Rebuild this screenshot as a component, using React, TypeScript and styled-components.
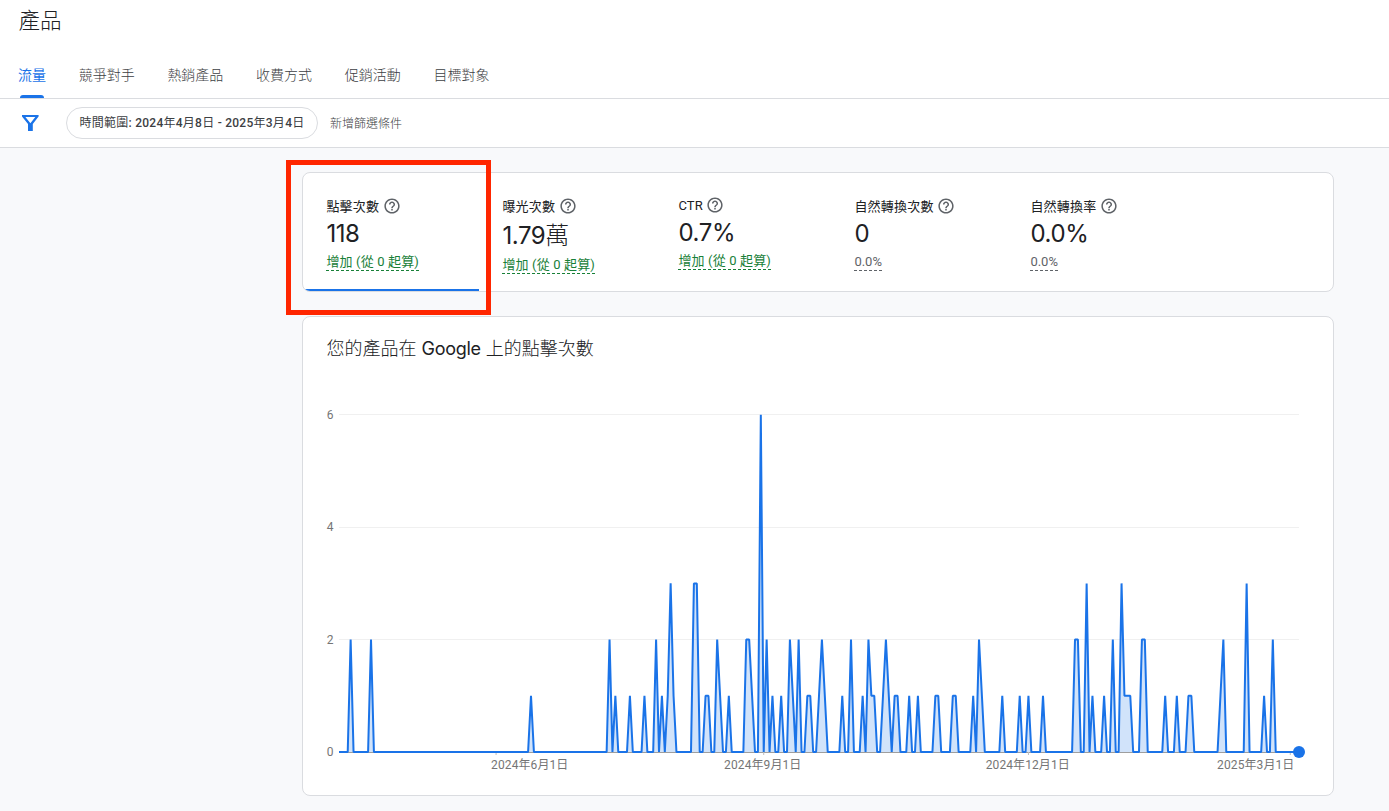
import React from "react";
import styled, { createGlobalStyle } from "styled-components";

const uiFont = `Roboto, "Noto Sans CJK TC", sans-serif`;
const displayFont = `Inter, "Noto Sans CJK TC", sans-serif`;

const GlobalStyle = createGlobalStyle`
  *, *::before, *::after { box-sizing: border-box; }
  body {
    margin: 0;
    background: #f8f9fb;
    color: #202124;
    font-family: ${uiFont};
    font-weight: 300;
    overflow: hidden;
  }
`;

const Page = styled.div`
  display: flex;
  flex-direction: column;
  min-height: 811px;
`;

const Header = styled.header`
  display: flex;
  flex-direction: column;
  height: 99px;
  background: #fff;
  border-bottom: 1px solid #dadce0;
`;

const PageTitle = styled.h1`
  margin: 0;
  padding: 0 18.5px;
  font-size: 21.5px;
  line-height: 42px;
  height: 52px;
  font-weight: 300;
`;

const Tabs = styled.nav`
  display: flex;
  gap: 32.7px;
  padding: 0 18px;
  height: 46px;
`;

const Tab = styled.a<{ $active?: boolean }>`
  display: flex;
  flex-direction: column;
  align-items: center;
  justify-content: space-between;
  font-size: 14px;
  line-height: 46px;
  white-space: nowrap;
  font-weight: ${(p) => (p.$active ? 400 : 300)};
  color: ${(p) => (p.$active ? "#1a73e8" : "#3c4043")};
`;

const TabLabel = styled.span`
  height: 43px;
`;

const TabIndicator = styled.span`
  width: 24px;
  height: 3px;
  border-radius: 3px 3px 0 0;
  background: #1a73e8;
`;

const FilterBar = styled.div`
  display: flex;
  align-items: center;
  height: 49px;
  padding-left: 18px;
  background: #fff;
  border-bottom: 1px solid #dadce0;
`;

const FilterIcon = styled.svg`
  width: 24px;
  height: 24px;
  margin-right: 24px;
  fill: #1a73e8;
`;

const Chip = styled.button`
  width: 252px;
  height: 32px;
  padding: 0;
  border: 1px solid #dadce0;
  border-radius: 16px;
  background: #fff;
  color: #3c4043;
  font: 500 12px/30px ${uiFont};
  letter-spacing: 0.25px;
  white-space: nowrap;
`;

const Han = styled.span`
  font-weight: 400;
`;

const AddFilter = styled.span`
  margin-left: 12px;
  padding-bottom: 2px;
  font-size: 12px;
  color: #3c4043;
`;

const Content = styled.main`
  display: flex;
  flex-direction: column;
  gap: 24px;
  width: 1032px;
  margin: 24px 0 0 302px;
  position: relative;
`;

const Card = styled.section`
  background: #fff;
  border: 1px solid #dadce0;
  border-radius: 8px;
  overflow: hidden;
`;

const MetricsCard = styled(Card)`
  display: flex;
  height: 120px;
`;

const Metric = styled.div<{ $active?: boolean }>`
  width: 176px;
  padding: 24px 0 0 23.4px;
  box-shadow: ${(p) => (p.$active ? "inset 0 -2px 0 #1a73e8" : "none")};
`;

const MetricLabel = styled.div<{ $latin?: boolean }>`
  display: flex;
  align-items: center;
  gap: 4.4px;
  height: ${(p) => (p.$latin ? 17 : 18)}px;
  font-size: 13px;
  font-weight: 400;
  letter-spacing: 0.2px;
  white-space: nowrap;
`;

const LabelText = styled.span<{ $latin?: boolean }>`
  padding-bottom: ${(p) => (p.$latin ? 0 : 2)}px;
`;

const HelpSvg = styled.svg<{ $raised?: boolean }>`
  width: 16px;
  height: 16px;
  margin-bottom: ${(p) => (p.$raised ? 1 : 0)}px;
  fill: #5f6368;
`;

const MetricValue = styled.div<{ $tall?: boolean }>`
  height: ${(p) => (p.$tall ? 39 : 36)}px;
  line-height: ${(p) => (p.$tall ? 42 : 37)}px;
  font-family: ${displayFont};
  font-size: 24px;
  font-weight: ${(p) => (p.$tall ? 300 : 400)};
  letter-spacing: -0.4px;
`;

const Figure = styled.span`
  font-weight: 400;
`;

const MetricDelta = styled.span<{ $positive?: boolean }>`
  display: inline-block;
  height: 19px;
  font-size: 13px;
  line-height: 20px;
  font-weight: 400;
  letter-spacing: ${(p) => (p.$positive ? 0.15 : 0)}px;
  white-space: nowrap;
  color: ${(p) => (p.$positive ? "#188038" : "#5f6368")};
  border-bottom: 1px dashed currentColor;
`;

const ChartCard = styled(Card)`
  display: flex;
  flex-direction: column;
  height: 480px;
`;

const ChartTitle = styled.h2`
  margin: 0;
  padding: 17px 23.5px 0;
  height: 84px;
  font-family: ${displayFont};
  font-size: 18px;
  line-height: 30px;
  font-weight: 300;
`;

const Brand = styled.span`
  font-weight: 400;
  letter-spacing: -0.3px;
`;

const ChartSvg = styled.svg`
  display: block;
  width: 1030px;
  height: 394px;
  font-family: ${uiFont};
  font-size: 12px;
  font-weight: 400;
  letter-spacing: 0.1px;
`;

const Highlight = styled.div`
  position: absolute;
  left: -16px;
  top: -12px;
  width: 205px;
  height: 155px;
  border: 5px solid #ff2600;
`;

const tabs = ["流量", "競爭對手", "熱銷產品", "收費方式", "促銷活動", "目標對象"];

const metrics = [
  { label: "點擊次數", value: "118", delta: "增加 (從 0 起算)", positive: true, active: true },
  { label: "曝光次數", value: "1.79", unit: "萬", delta: "增加 (從 0 起算)", positive: true },
  { label: "CTR", value: "0.7%", delta: "增加 (從 0 起算)", positive: true, latin: true },
  { label: "自然轉換次數", value: "0", delta: "0.0%" },
  { label: "自然轉換率", value: "0.0%", delta: "0.0%" },
];

// Clicks per day, keyed by days since 2024-04-08; other days have none.
const clicks: Record<number, number> = {
  4: 2, 11: 2, 66: 1, 93: 2, 95: 1, 100: 1, 105: 1, 109: 2, 111: 1,
  113: 1, 114: 3, 115: 1, 122: 3, 123: 3, 126: 1, 127: 1, 130: 2, 131: 1,
  134: 1, 140: 2, 141: 2, 142: 1, 145: 6, 147: 2, 149: 1, 152: 1, 155: 2,
  156: 1, 158: 2, 161: 1, 162: 1, 165: 1, 166: 2, 167: 1, 173: 1, 176: 2,
  180: 1, 182: 2, 183: 1, 184: 1, 187: 1, 188: 2, 189: 1, 191: 1, 192: 1,
  196: 1, 199: 1, 205: 1, 206: 1, 211: 1, 212: 1, 218: 1, 220: 2, 221: 1,
  228: 1, 234: 1, 237: 1, 242: 1, 253: 2, 254: 2, 257: 3, 259: 1, 263: 1,
  266: 2, 269: 3, 270: 1, 271: 1, 272: 1, 276: 2, 277: 2, 284: 1, 288: 1,
  292: 1, 293: 1, 303: 1, 304: 2, 312: 3, 318: 1, 321: 2,
};
const lastDay = 330;
const left = 36;
const right = 996;
const baseY = 351;
const unit = 56.2;
const dayX = (d: number) => left + (d * (right - left)) / lastDay;
const line = Array.from(
  { length: lastDay + 1 },
  (_, d) => `${dayX(d).toFixed(2)},${(baseY - (clicks[d] ?? 0) * unit).toFixed(1)}`
).join(" ");

const dateTicks = [
  { day: 54, label: "2024年6月1日", x: 226.8 },
  { day: 146, label: "2024年9月1日", x: 459.8 },
  { day: 237, label: "2024年12月1日", x: 724.8 },
  { day: 327, label: "2025年3月1日", x: 952.8 },
];

function HelpIcon({ raised }: { raised?: boolean }) {
  return (
    <HelpSvg $raised={raised} viewBox="1.5 1.5 21 21">
      <path d="M11 18h2v-2h-2v2zm1-16C6.48 2 2 6.48 2 12s4.48 10 10 10 10-4.48 10-10S17.52 2 12 2zm0 18c-4.41 0-8-3.59-8-8s3.59-8 8-8 8 3.59 8 8-3.59 8-8 8zm0-14c-2.21 0-4 1.79-4 4h2c0-1.1.9-2 2-2s2 .9 2 2c0 2-3 1.75-3 5h2c0-2.25 3-2.5 3-5 0-2.21-1.79-4-4-4z" />
    </HelpSvg>
  );
}

function ClicksChart() {
  return (
    <ChartSvg viewBox="0 0 1030 394">
      {[2, 4, 6].map((v) => (
        <line key={v} x1={left} x2={right} y1={Math.floor(baseY - v * unit) + 0.5} y2={Math.floor(baseY - v * unit) + 0.5} stroke="#f0f0f0" />
      ))}
      {[0, 2, 4, 6].map((v) => (
        <text key={v} x="30.7" y={baseY - v * unit + 4} textAnchor="end" fill="#757575">{v}</text>
      ))}
      <polygon points={`${left},${baseY} ${line} ${right},${baseY}`} fill="#1a73e8" fillOpacity="0.2" />
      <line x1={left} x2={right} y1={baseY + 0.5} y2={baseY + 0.5} stroke="#9e9e9e" />
      {dateTicks.map((t) => (
        <g key={t.day}>
          <line x1={dayX(t.day)} x2={dayX(t.day)} y1={baseY} y2={baseY + 3} stroke="#bdbdbd" />
          <text x={t.x} y={baseY + 17} textAnchor="middle" fill="#757575">{t.label}</text>
        </g>
      ))}
      <polyline points={line} fill="none" stroke="#1a73e8" strokeWidth="2" strokeLinejoin="bevel" />
      <circle cx={right} cy={baseY} r="6" fill="#1a73e8" />
    </ChartSvg>
  );
}

export default function App() {
  return (
    <Page>
      <GlobalStyle />
      <Header>
        <PageTitle>產品</PageTitle>
        <Tabs>
          {tabs.map((t, i) => (
            <Tab key={t} $active={i === 0}>
              <TabLabel>{t}</TabLabel>
              {i === 0 && <TabIndicator />}
            </Tab>
          ))}
        </Tabs>
      </Header>
      <FilterBar>
        <FilterIcon viewBox="0 0 24 24">
          <path fillRule="evenodd" d="M4 4H20.6V5.6L14.8 13V20H10V13L4 5.6ZM7.4 6L12.4 12.2L17.3 6Z" />
        </FilterIcon>
        <Chip>
          {"時間範圍: 2024年4月8日 - 2025年3月4日".split(/([年月日時間範圍]+)/).map((part, i) =>
            i % 2 ? <Han key={i}>{part}</Han> : part
          )}
        </Chip>
        <AddFilter>新增篩選條件</AddFilter>
      </FilterBar>
      <Content>
        <MetricsCard>
          {metrics.map((m) => (
            <Metric key={m.label} $active={m.active}>
              <MetricLabel $latin={m.latin}>
                <LabelText $latin={m.latin}>{m.label}</LabelText>
                <HelpIcon raised={m.latin} />
              </MetricLabel>
              <MetricValue $tall={!!m.unit}>
                <Figure>{m.value}</Figure>
                {m.unit}
              </MetricValue>
              <MetricDelta $positive={m.positive}>{m.delta}</MetricDelta>
            </Metric>
          ))}
        </MetricsCard>
        <ChartCard>
          <ChartTitle>
            您的產品在 <Brand>Google</Brand> 上的點擊次數
          </ChartTitle>
          <ClicksChart />
        </ChartCard>
        <Highlight />
      </Content>
    </Page>
  );
}
